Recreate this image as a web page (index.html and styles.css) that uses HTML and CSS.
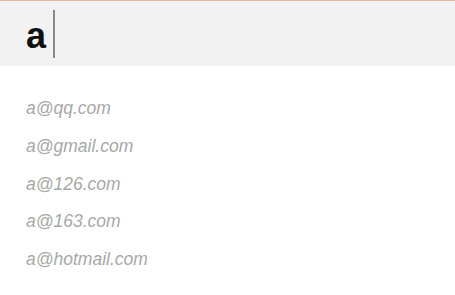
FILE: index.html
```html
<!DOCTYPE html>
<html>
<head>
<meta charset="utf-8">
<link rel="stylesheet" href="styles.css">
</head>
<body>
<div class="search">
  <span class="query">a</span><span class="caret"></span>
</div>
<ul class="suggestions">
  <li>a@qq.com</li>
  <li>a@gmail.com</li>
  <li>a@126.com</li>
  <li>a@163.com</li>
  <li>a@hotmail.com</li>
</ul>
</body>
</html>
```
FILE: styles.css
```css
html, body {
  margin: 0;
  padding: 0;
  background: #ffffff;
}
body {
  font-family: "Liberation Sans", Arial, sans-serif;
}
.search {
  box-sizing: border-box;
  height: 66px;
  border-top: 1px solid #efb6a6;
  background: #f2f2f2;
  display: flex;
  align-items: center;
  padding-left: 26px;
}
.query {
  font-size: 36px;
  font-weight: bold;
  line-height: 37px;
  color: #111111;
  padding-top: 3px;
}
.caret {
  width: 2px;
  height: 48px;
  margin-left: 7px;
  background: #8a8a8a;
}
.suggestions {
  list-style: none;
  margin: 0;
  padding: 24px 0 0 26px;
}
.suggestions li {
  font-size: 17.5px;
  line-height: 37.75px;
  font-style: italic;
  color: #a8a8a8;
}
```
